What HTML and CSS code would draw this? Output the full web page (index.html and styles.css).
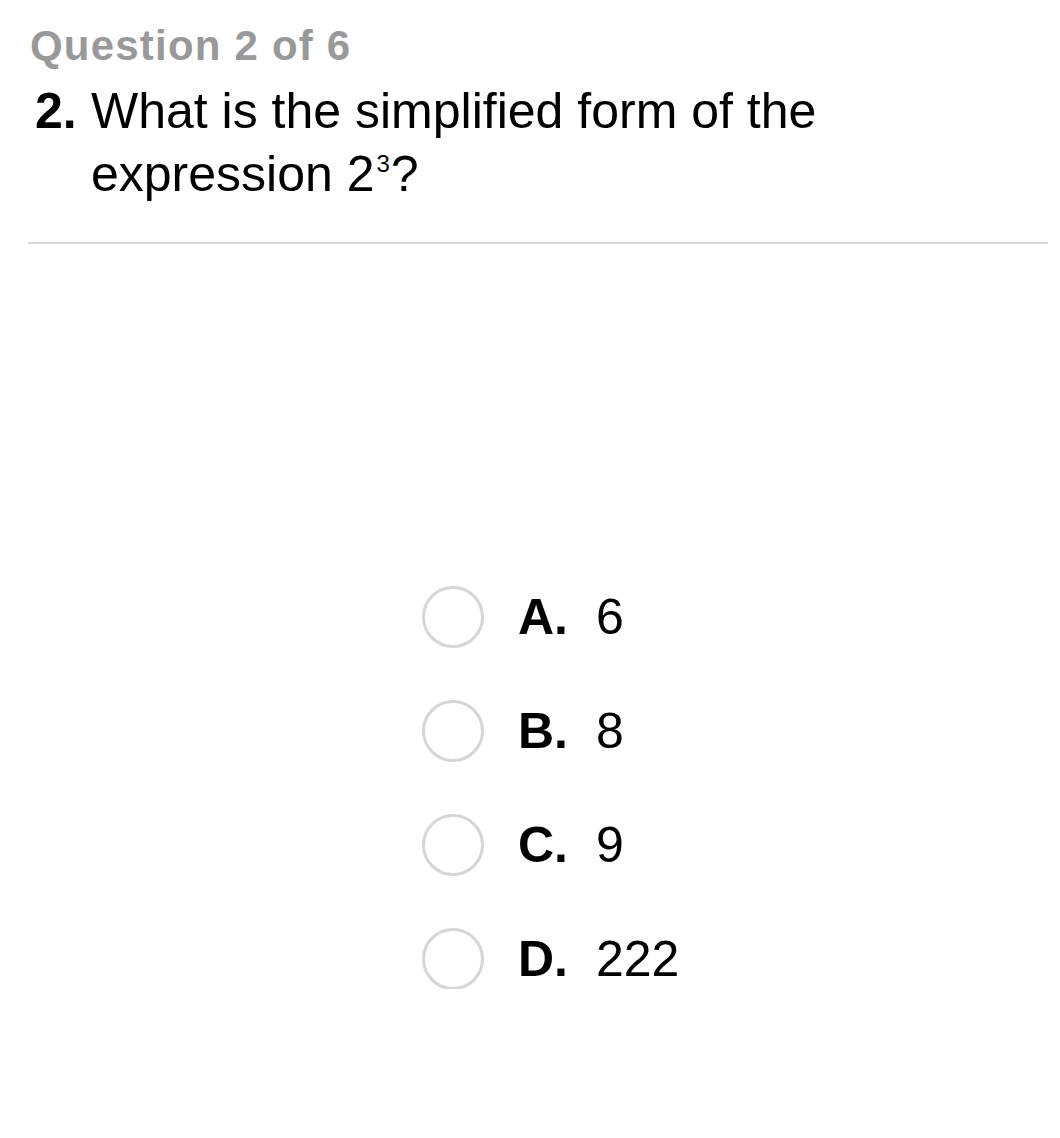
FILE: index.html
```html
<!DOCTYPE html>
<html>
<head>
<meta charset="utf-8">
<link rel="stylesheet" href="styles.css">
</head>
<body>
<div class="page">
  <div class="progress">Question 2 of 6</div>
  <div class="question">
    <span class="qnum">2.</span>
    <span class="qtext">What is the simplified form of the expression 2<sup class="exp">3</sup>?</span>
  </div>
  <hr class="divider">
  <div class="options">
    <div class="option"><span class="radio"></span><span class="letter">A.</span><span class="value">6</span></div>
    <div class="option"><span class="radio"></span><span class="letter">B.</span><span class="value">8</span></div>
    <div class="option"><span class="radio"></span><span class="letter">C.</span><span class="value">9</span></div>
    <div class="option"><span class="radio"></span><span class="letter">D.</span><span class="value">222</span></div>
  </div>
</div>
</body>
</html>
```
FILE: styles.css
```css
html, body {
  margin: 0;
  padding: 0;
  background: #ffffff;
}
body {
  font-family: "Liberation Sans", Arial, sans-serif;
  color: #000;
}
.page {
  padding: 20px 12px 0 28px;
}
.progress {
  font-size: 42px;
  font-weight: bold;
  color: #999999;
  line-height: 52px;
  padding-left: 2px;
  letter-spacing: 1.2px;
}
.question {
  display: flex;
  font-size: 50px;
  line-height: 63px;
  padding-left: 7px;
  margin-top: 8px;
  width: 800px;
}
.qnum {
  font-weight: bold;
  flex: none;
  width: 56px;
}
.qtext {
  flex: 1;
}
.exp {
  font-size: 24px;
  vertical-align: top;
  line-height: 24px;
  position: relative;
  top: 9px;
  margin: 0 1px 0 2px;
}
.divider {
  border: none;
  height: 2px;
  background: #d8d8d8;
  margin: 36px 0 0 0;
}
.options {
  display: flex;
  flex-direction: column;
  gap: 53px;
  margin-top: 342px;
  padding-left: 394px;
}
.option {
  display: flex;
  align-items: center;
  height: 61px;
}
.radio {
  width: 56px;
  height: 56px;
  border: 3px solid #d6d6d6;
  border-radius: 50%;
  flex: none;
}
.letter {
  font-size: 50px;
  font-weight: bold;
  margin-left: 34px;
  width: 78px;
}
.value {
  font-size: 50px;
}
```
